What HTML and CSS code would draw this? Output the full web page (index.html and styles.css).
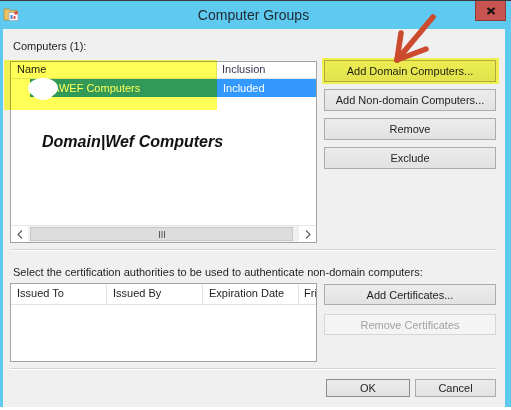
FILE: index.html
```html
<!DOCTYPE html>
<html>
<head>
<meta charset="utf-8">
<title>Computer Groups</title>
<link rel="stylesheet" href="styles.css">
</head>
<body>
<div class="window">
  <div class="titlebar">
    <div class="tb-left">
      <svg class="app-icon" width="16" height="16" viewBox="0 0 16 16">
        <path d="M1 3 h5 l1.5 1.5 H14 V14 H1 Z" fill="#e8c36a" stroke="#b8913a" stroke-width="0.8"/>
        <rect x="6" y="6.5" width="9" height="8" fill="#ffffff" stroke="#9aa7b5" stroke-width="0.7"/>
        <rect x="11.5" y="5.5" width="3" height="3" fill="#e0403a"/>
        <rect x="7.5" y="9" width="2" height="4" fill="#4a7fd0"/>
        <rect x="10.5" y="10" width="2" height="3" fill="#e05050"/>
      </svg>
    </div>
    <div class="title">Computer Groups</div>
    <div class="tb-right">
      <div class="close">
        <svg width="10" height="8" viewBox="0 0 10 8">
          <path d="M1.5 1 L8.5 7 M8.5 1 L1.5 7" stroke="#111" stroke-width="2.2" stroke-linecap="butt"/>
        </svg>
      </div>
    </div>
  </div>

  <div class="client">
    <div class="label">Computers (1):</div>
    <div class="section-row">
      <div class="listview lv-computers">
        <div class="lv-header">
          <div class="hcol hcol-name">Name</div>
          <div class="hcol hcol-incl">Inclusion</div>
        </div>
        <div class="lv-row">
          <div class="cell cell-name"><span class="sel sel-name">AWEF Computers</span></div>
          <div class="cell cell-incl sel">Included</div>
        </div>
        <div class="lv-body">
          <div class="annotation">Domain|Wef Computers</div>
        </div>
        <div class="hscroll">
          <div class="sb-btn">
            <svg width="6" height="9" viewBox="0 0 6 9"><path d="M5 0.5 L1 4.5 L5 8.5" fill="none" stroke="#606060" stroke-width="1.2"/></svg>
          </div>
          <div class="sb-thumb">
            <svg width="8" height="7" viewBox="0 0 8 7"><path d="M1.5 0 V7 M4 0 V7 M6.5 0 V7" stroke="#5a5a5a" stroke-width="1"/></svg>
          </div>
          <div class="sb-btn">
            <svg width="6" height="9" viewBox="0 0 6 9"><path d="M1 0.5 L5 4.5 L1 8.5" fill="none" stroke="#606060" stroke-width="1.2"/></svg>
          </div>
        </div>
      </div>
      <div class="btn-col">
        <button class="btn">Add Domain Computers...</button>
        <button class="btn">Add Non-domain Computers...</button>
        <button class="btn">Remove</button>
        <button class="btn">Exclude</button>
      </div>
    </div>

    <div class="sep"></div>

    <div class="label label-cert">Select the certification authorities to be used to authenticate non-domain computers:</div>
    <div class="section-row cert-row">
      <div class="listview lv-certs">
        <div class="lv-header cert-header">
          <div class="hcol ccol">Issued To</div>
          <div class="hcol ccol">Issued By</div>
          <div class="hcol ccol">Expiration Date</div>
          <div class="hcol ccol ccol-last">Fri</div>
        </div>
      </div>
      <div class="btn-col cert-btns">
        <button class="btn btn-cert">Add Certificates...</button>
        <button class="btn btn-cert btn-disabled">Remove Certificates</button>
      </div>
    </div>

    <div class="sep sep2"></div>

    <div class="footer">
      <button class="btn btn-ok">OK</button>
      <button class="btn btn-cancel">Cancel</button>
    </div>
  </div>
</div>

<div class="hl hl-list"></div>
<div class="hl hl-btn"></div>
<div class="blob"></div>
<div class="blob blob2"></div>
<svg class="arrow" width="511" height="410" viewBox="0 0 511 410">
  <g stroke="#cc4a2e" stroke-width="5.5" stroke-linecap="round" fill="none">
    <path d="M433 17 L397 60"/>
    <path d="M397 60 L401 33"/>
    <path d="M397 60 L426 49"/>
  </g>
</svg>
</body>
</html>
```

FILE: styles.css
```css
html, body {
  margin: 0;
  padding: 0;
}
body {
  width: 511px;
  height: 410px;
  background: #ffffff;
  position: relative;
  overflow: hidden;
  font-family: "Liberation Sans", Arial, sans-serif;
  font-size: 11px;
  color: #1e1e1e;
}
.window {
  width: 511px;
  height: 407px;
  background: #5fcaf0;
  border-top: 1px solid #3a3a3a;
  box-sizing: border-box;
  display: flex;
  flex-direction: column;
}
.titlebar {
  height: 28px;
  display: grid;
  grid-template-columns: 1fr auto 1fr;
  align-items: start;
  padding-right: 4px;
}
.tb-left {
  padding-left: 3px;
  padding-top: 5px;
}
.app-icon {
  display: block;
}
.title {
  font-size: 14px;
  color: #202b33;
  line-height: 28px;
  height: 28px;
}
.tb-right {
  display: flex;
  justify-content: flex-end;
}
.close {
  width: 31px;
  height: 20px;
  margin-right: 1px;
  background: #c75450;
  border: 1px solid #8f3a36;
  border-top: none;
  box-sizing: border-box;
  display: flex;
  align-items: center;
  justify-content: center;
}
.close svg { display: block; }

.client {
  margin-left: 3px;
  width: 502px;
  height: 378px;
  box-sizing: border-box;
  background: #f0f0f0;
  padding: 9px 9px 0 7px;
  display: flex;
  flex-direction: column;
}
.label {
  padding-left: 3px;
  line-height: 16px;
  height: 16px;
  white-space: nowrap;
}
.section-row {
  display: flex;
  gap: 7px;
  align-items: flex-start;
  margin-top: 6px;
}
.listview {
  width: 307px;
  background: #ffffff;
  border: 1px solid #a3a3a3;
  box-sizing: border-box;
  display: flex;
  flex-direction: column;
  overflow: hidden;
}
.lv-computers {
  height: 182px;
  margin-top: 1px;
}
.lv-header {
  display: flex;
  height: 16px;
  border-bottom: 1px solid #e3e3e3;
  flex-shrink: 0;
}
.hcol {
  line-height: 15px;
  color: #1e1e1e;
  white-space: nowrap;
  overflow: hidden;
  box-sizing: border-box;
}
.hcol-name {
  width: 206px;
  padding-left: 6px;
  border-right: 1px solid #e3e3e3;
}
.hcol-incl {
  flex: 1;
  padding-left: 5px;
  color: #3a3450;
}
.lv-row {
  display: flex;
  height: 18px;
  flex-shrink: 0;
}
.cell {
  line-height: 18px;
  white-space: nowrap;
}
.cell-name {
  width: 206px;
  padding-left: 19px;
  box-sizing: border-box;
  display: flex;
}
.sel {
  background: #3399ff;
  color: #ffffff;
}
.sel-name {
  flex: 1;
  padding-left: 22px;
}
.cell-incl {
  flex: 1;
  padding-left: 6px;
}
.lv-body {
  flex: 1;
}
.annotation {
  padding-top: 36px;
  padding-left: 31px;
  font-size: 16px;
  font-weight: bold;
  font-style: italic;
  line-height: 18px;
  color: #111111;
}
.hscroll {
  height: 17px;
  flex-shrink: 0;
  display: flex;
  align-items: stretch;
  background: #f0f0f0;
  border-top: 1px solid #e6e6e6;
  box-sizing: border-box;
}
.sb-btn {
  width: 17px;
  background: #ffffff;
  display: flex;
  align-items: center;
  justify-content: center;
}
.sb-btn svg { display: block; }
.sb-thumb {
  width: 263px;
  margin: 1px 2px;
  background: #dcdcdc;
  border: 1px solid #c9c9c9;
  box-sizing: border-box;
  display: flex;
  align-items: center;
  justify-content: center;
}
.sb-thumb + .sb-btn {
  margin-left: auto;
}
.btn-col {
  display: flex;
  flex-direction: column;
  gap: 7px;
}
.btn {
  width: 172px;
  height: 22px;
  margin: 0;
  padding: 0;
  font-family: "Liberation Sans", Arial, sans-serif;
  font-size: 11px;
  color: #1e1e1e;
  background: linear-gradient(#ececec, #e2e2e2);
  border: 1px solid #acacac;
  box-sizing: border-box;
  text-align: center;
  white-space: nowrap;
}
.sep {
  margin-top: 6px;
  height: 2px;
  border-top: 1px solid #d5d5d5;
  border-bottom: 1px solid #ffffff;
  box-sizing: border-box;
  flex-shrink: 0;
}
.label-cert {
  margin-top: 13px;
}
.cert-row {
  margin-top: 3px;
}
.lv-certs {
  height: 79px;
}
.cert-header {
  height: 20px;
}
.ccol {
  width: 96px;
  padding-left: 6px;
  line-height: 19px;
  border-right: 1px solid #e3e3e3;
  color: #1e1e1e;
}
.ccol-last {
  border-right: none;
  flex: 1;
  padding-left: 5px;
}
.cert-btns {
  margin-top: 1px;
  gap: 9px;
}
.btn-cert {
  height: 21px;
}
.btn-disabled {
  background: #f4f4f4;
  border-color: #d6d6d6;
  color: #a2a2a2;
}
.sep2 {
  margin-top: 6px;
}
.footer {
  margin-top: 9px;
  display: flex;
  justify-content: flex-end;
  gap: 5px;
}
.btn-ok {
  width: 84px;
  height: 18px;
  border-color: #8c8c8c;
}
.btn-cancel {
  width: 81px;
  height: 18px;
}

/* annotation overlays drawn over the screenshot */
.hl {
  position: absolute;
  background: #ffff58;
  mix-blend-mode: multiply;
}
.hl-list {
  left: 4px;
  top: 60px;
  width: 213px;
  height: 50px;
}
.hl-btn {
  left: 322px;
  top: 58px;
  width: 177px;
  height: 26px;
}
.blob {
  position: absolute;
  left: 28px;
  top: 78px;
  width: 30px;
  height: 20px;
  background: #ffffff;
  border-radius: 50%;
}
.blob2 {
  left: 32px;
  top: 84px;
  width: 22px;
  height: 16px;
}
.arrow {
  position: absolute;
  left: 0;
  top: 0;
  pointer-events: none;
}
```
